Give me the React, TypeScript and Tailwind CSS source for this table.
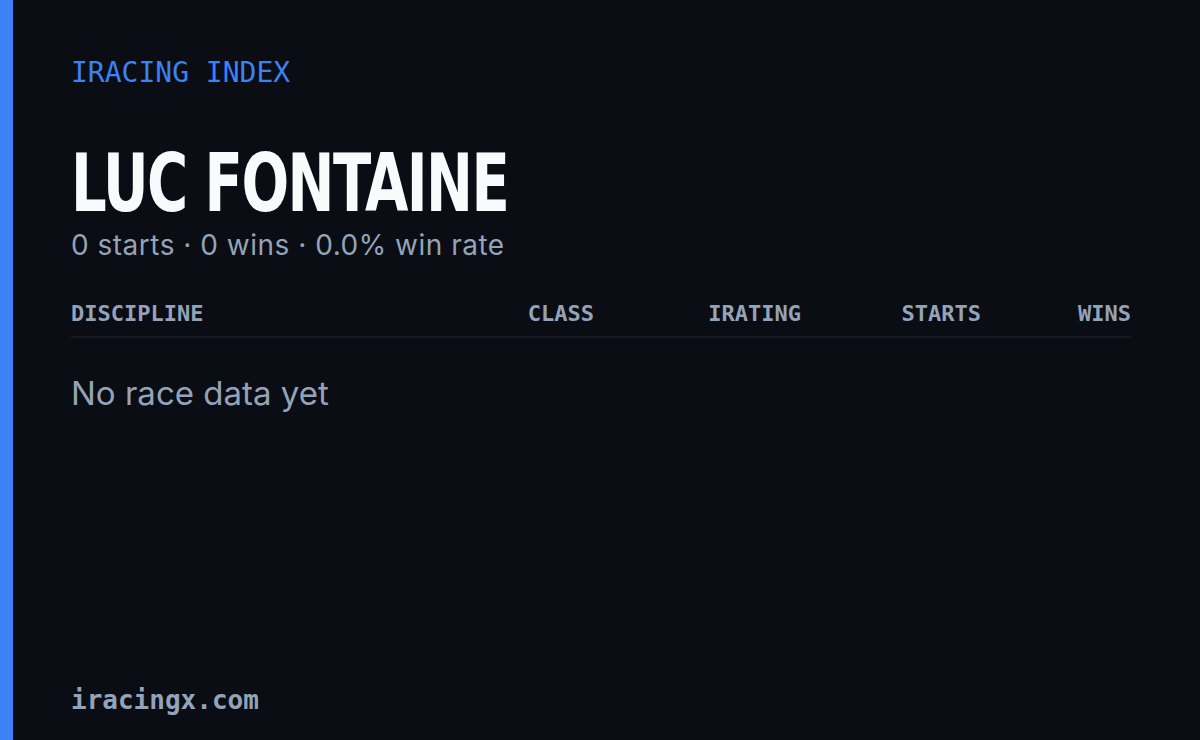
import React from "react";

const columns = [
  { label: "DISCIPLINE", align: "text-left" },
  { label: "CLASS", align: "text-right" },
  { label: "IRATING", align: "text-right" },
  { label: "STARTS", align: "text-right" },
  { label: "WINS", align: "text-right" },
];

export default function App() {
  const starts = 0;
  const wins = 0;
  const winRate = starts ? (wins / starts) * 100 : 0;

  return (
    <div className="flex h-[740px] w-[1200px] bg-[#0a0d14]">
      {/* accent strip */}
      <div className="w-[13px] shrink-0 bg-[#3b82f6]" />

      <div className="flex flex-1 flex-col pl-[58px] pr-[69px] pt-[55px] pb-[24px]">
        <div className="font-['DejaVu_Sans_Mono',monospace] text-[28px] leading-[36px] text-[#3b82f6]">
          IRACING INDEX
        </div>

        <h1 className="mt-[50px] h-[84px] overflow-visible whitespace-nowrap">
          <span className="inline-block origin-left scale-x-[0.77] font-['Liberation_Sans_Narrow','DejaVu_Sans_Condensed',sans-serif] text-[81px] font-bold leading-[84px] tracking-[-2px] text-[#f8fafc]">
            LUC FONTAINE
          </span>
        </h1>

        <p className="mt-[2px] font-['Inter','Noto_Sans',sans-serif] text-[28px] leading-[36px] tracking-[0.5px] text-[#94a3b8]">
          {starts} starts · {wins} wins · {winRate.toFixed(1)}% win rate
        </p>

        <div className="mt-[37px] grid grid-cols-[1fr_200px_207px_180px_150px] border-b-2 border-[#151a24] pb-[8px] font-['DejaVu_Sans_Mono',monospace] text-[22px] font-semibold leading-[28px] text-[#94a3b8]">
          {columns.map((c) => (
            <div key={c.label} className={c.align}>
              {c.label}
            </div>
          ))}
        </div>

        <div className="mt-[35px] font-['Inter','Noto_Sans',sans-serif] text-[33px] leading-[40px] text-[#94a3b8]">
          No race data yet
        </div>

        <div className="mt-auto font-['DejaVu_Sans_Mono',monospace] text-[26px] font-semibold leading-[32px] text-[#94a3b8]">
          iracingx.com
        </div>
      </div>
    </div>
  );
}
